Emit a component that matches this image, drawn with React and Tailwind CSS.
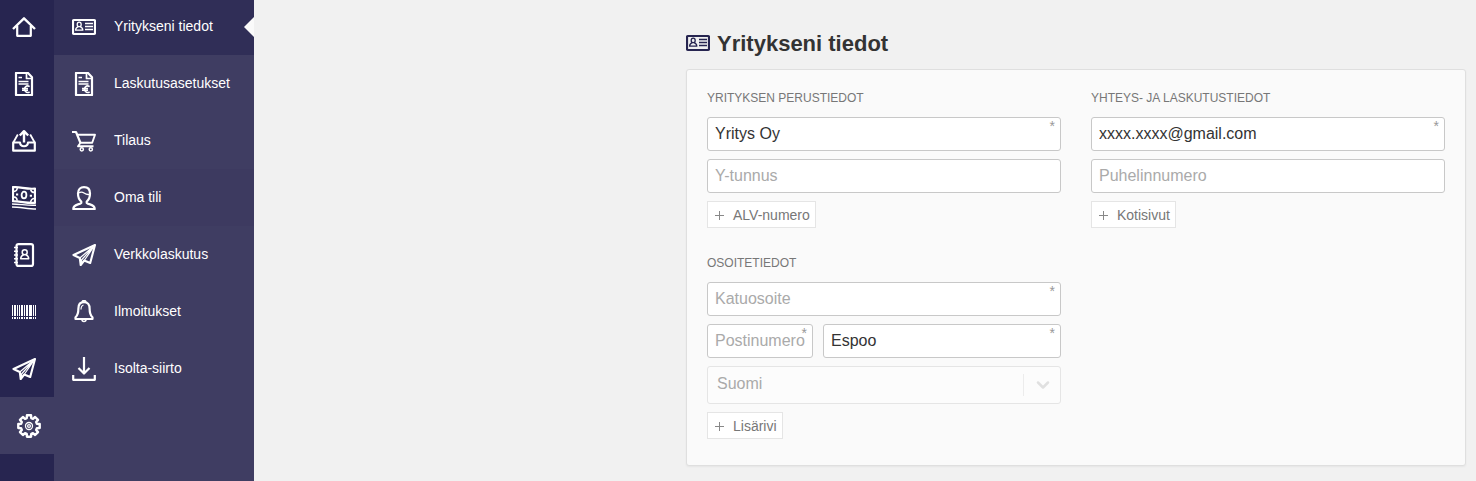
import { ChevronDown } from "lucide-react";

function Icon({ children, className = "w-6 h-6" }) {
  return (
    <svg
      viewBox="0 0 24 24"
      className={className}
      fill="none"
      stroke="currentColor"
      strokeWidth="2.2"
      strokeLinejoin="round"
      aria-hidden="true"
    >
      {children}
    </svg>
  );
}

const HomeIcon = () => (
  <Icon>
    <path d="M1 14 12 3.3 23 14" strokeWidth="2.4" />
    <path d="M5.2 11V20.800h13.600V11" />
  </Icon>
);

const CardIcon = ({ className }) => (
  <Icon className={className}>
    <rect x="1" y="5" width="22" height="14" rx="1" />
    <g strokeWidth="1.3">
      <ellipse cx="7.2" cy="9.4" rx="2" ry="2.3" />
      <path d="M6.2 11.6c-1.800.7-2.600 1.300-2.600 3.600h7.200c0-2.300-.8-2.900-2.600-3.600" />
      <path d="M13 8.500H21M13 11.500H21M13 14.500H21" />
    </g>
  </Icon>
);

const InvoiceIcon = () => (
  <Icon>
    <path d="M4 1h12l4 4.200V23H4Z" />
    <path d="M14.500 1.500v5H20" strokeWidth="1.700" />
    <path d="M6.500 5.500H10M6.500 9.500H16.500M6.500 12H16.500" strokeWidth="1.300" />
    <path d="M17.600 14.600a3.200 3.200 0 1 0 0 5.200M10 16.500h6M10 18.300h6" strokeWidth="1.600" />
  </Icon>
);

const OutboxIcon = () => (
  <Icon>
    <path d="M1.200 13.500H8c.4 5 7.600 5 8 0h6.800v8.200H1.200Z" />
    <path d="M1.300 13.500 5.800 5.500M22.700 13.500 18.200 5.500" strokeWidth="1.800" />
    <path d="M12 13.500V2.500M7.800 6.500 12 2.200l4.200 4.300" strokeWidth="2.400" />
  </Icon>
);

const CashIcon = () => (
  <Icon>
    <path d="M1 1c8 0 14 2.500 22 1.600v14.200C15 17.600 9 15.200 1 15.200Z" />
    <ellipse cx="12" cy="9" rx="2.400" ry="3.300" strokeWidth="1.800" />
    <path d="M2 5.500q3-.3 3.300-3.500M18.600 3.500q.6 3 4 3M2 11q3 .2 3.200 3.500M22 12.500q-3 .4-3.400 4" strokeWidth="1.500" />
    <path d="M4 8.500h2.200M17.800 9.800H20" strokeWidth="1.900" />
    <path d="M0 18c8 0 16 1.800 24 1.200M0 21c8 0 16 2 24 2" strokeWidth="1.400" />
  </Icon>
);

const ContactsIcon = () => (
  <Icon>
    <rect x="4.500" y="1.100" width="16.500" height="21.800" rx="2" />
    <path d="M2 4.500h4M2 8.200h4M2 12h4M2 15.800h4M2 19.500h4" strokeWidth="1.400" />
    <g strokeWidth="1.500">
      <circle cx="12.700" cy="9.300" r="2.500" />
      <path d="M11.600 11.800c-1.900.8-2.900 1.400-2.900 4h8c0-2.600-1-3.200-2.900-4" />
    </g>
  </Icon>
);

const BARS = [
  [0, 1], [2, 2], [5, 1], [7, 1], [9, 2], [12, 1], [14, 2], [17, 3], [21, 1], [23, 1],
];

const BarcodeIcon = () => (
  <Icon>
    <g fill="currentColor" stroke="none" shapeRendering="crispEdges">
      {BARS.map(([x, w]) => (
        <rect key={x} x={x} y="5" width={w} height="11" />
      ))}
      {BARS.map(([x, w]) => (
        <rect key={x} x={x} y="17" width={w} height="2" />
      ))}
    </g>
  </Icon>
);

const PlaneIcon = () => (
  <Icon>
    <path d="M23 2 1.500 12l6.300 3 .9 7 3.500-4.500L18.200 20Z" strokeWidth="2.100" />
    <path d="M23 2 7.800 15M23 2 9.500 17v4M23 2 12.200 17.500" strokeWidth="1.200" />
  </Icon>
);

const CartIcon = () => (
  <Icon>
    <path d="M0 3h4l4.500 11" />
    <path d="M5.500 5.800H23L20.200 13.800H8.500L6 17.200h15.500" strokeWidth="1.900" />
    <circle cx="9.800" cy="20.300" r="1.600" strokeWidth="1.500" />
    <circle cx="18.800" cy="20.300" r="1.600" strokeWidth="1.500" />
  </Icon>
);

const UserIcon = () => (
  <Icon>
    <path d="M9.300 15.500C6.800 13.500 6 10.500 6 7.500 6 3.200 8.500 1.200 12 1.200s6 2 6 6.300c0 3-.8 6-3.300 8v1.300c2.500 2.200 8 1.200 8 6.200H1.300c0-5 5.500-4 8-6.200Z" />
    <path d="M6.500 7C9 5.500 10.500 6 12 7s4 1.800 5.500 1.300" strokeWidth="1.400" />
  </Icon>
);

const BellIcon = () => (
  <Icon>
    <path d="M12 2.200c-3.800 0-5.600 2.800-5.600 6.300 0 5-.8 7-2.900 8.800V19h17v-1.700c-2.100-1.800-2.900-3.800-2.900-8.800 0-3.500-1.800-6.300-5.600-6.300Z" />
    <path d="M10.300 2.200a1.700 1.700 0 0 1 3.400 0M10 19.500a2 2 0 0 0 4 0" strokeWidth="1.600" />
    <path d="M9 9.500c0-2.200.8-4 2.500-4.500" strokeWidth="1.200" />
  </Icon>
);

const DownloadIcon = () => (
  <Icon>
    <path d="M12 0v16M6.500 11l5.500 5.500 5.500-5.500" />
    <path d="M1.200 18v4.800h21.600V18" />
  </Icon>
);

// eight teeth, four corner points each
const gearPoints = Array.from({ length: 8 }, (_, i) => {
  const mid = (i * Math.PI) / 4;
  return [[8.2, -0.28], [10.9, -0.19], [10.9, 0.19], [8.2, 0.28]]
    .map(([r, a]) => `${12 + r * Math.cos(mid + a)},${12 + r * Math.sin(mid + a)}`)
    .join(" ");
}).join(" ");

const GearIcon = () => (
  <Icon>
    <polygon points={gearPoints} strokeWidth="2.400" />
    <circle cx="12" cy="12" r="3.500" strokeWidth="1.300" />
    <circle cx="12" cy="12" r="1.400" strokeWidth="1.300" />
  </Icon>
);

const railItems = [
  { label: "Etusivu", icon: HomeIcon },
  { label: "Laskut", icon: InvoiceIcon },
  { label: "Lähetetyt", icon: OutboxIcon },
  { label: "Maksut", icon: CashIcon },
  { label: "Asiakkaat", icon: ContactsIcon },
  { label: "Tuotteet", icon: BarcodeIcon },
  { label: "Lähetys", icon: PlaneIcon },
  { label: "Asetukset", icon: GearIcon, active: true },
];

const menuItems = [
  { label: "Yritykseni tiedot", icon: CardIcon, bg: "bg-[#302e57]", active: true },
  { label: "Laskutusasetukset", icon: InvoiceIcon },
  { label: "Tilaus", icon: CartIcon },
  { label: "Oma tili", icon: UserIcon, bg: "bg-[#3d3a60]" },
  { label: "Verkkolaskutus", icon: PlaneIcon },
  { label: "Ilmoitukset", icon: BellIcon },
  { label: "Isolta-siirto", icon: DownloadIcon },
];

function Rail() {
  return (
    <nav className="w-[54px] shrink-0 bg-[#272550]">
      <div className="-mt-0.5">
        {railItems.map(({ label, icon: ItemIcon, active }) => (
          <a
            key={label}
            href="#"
            aria-label={label}
            className={`flex h-[57px] items-center ${active ? "bg-[#3f3d62] pl-[17px]" : "pl-3"}`}
          >
            <ItemIcon />
          </a>
        ))}
      </div>
    </nav>
  );
}

function SideMenu() {
  return (
    <nav className="w-[200px] shrink-0 bg-[#3f3d62]">
      <div className="-mt-0.5">
        {menuItems.map(({ label, icon: ItemIcon, bg = "", active }) => (
          <a key={label} href="#" className={`relative flex h-[57px] items-center pl-[18px] text-sm ${bg}`}>
            <ItemIcon />
            <span className="ml-[18px] pb-0.5">{label}</span>
            {active && (
              <svg viewBox="0 0 10 20" className="absolute right-0 h-5 w-2.5" fill="#fafafa" aria-hidden="true">
                <path d="M10 0v20L0 10Z" />
              </svg>
            )}
          </a>
        ))}
      </div>
    </nav>
  );
}

function Field({ label, value, type = "text", required, className = "" }) {
  return (
    <div className={`relative ${className}`}>
      <input
        type={type}
        aria-label={label}
        placeholder={label}
        defaultValue={value}
        required={required}
        className="block h-[34px] w-full rounded-[3px] border border-[#c8c8c8] bg-white px-[7px] text-base text-[#333] shadow-none outline-none placeholder:text-[#aaa]"
      />
      {required && <span className="absolute top-px right-[6px] text-sm leading-4 text-[#999]">*</span>}
    </div>
  );
}

function AddButton({ children }) {
  return (
    <button
      type="button"
      className="flex h-[27px] items-center gap-2 self-start border border-[#e5e5e5] bg-white pr-[5px] pl-[6px] text-sm text-[#777]"
    >
      <svg viewBox="0 0 11 11" className="mt-0.5 h-[11px] w-[11px]" stroke="#888" aria-hidden="true">
        <path d="M5.500 1v9M1 5.500h9" />
      </svg>
      {children}
    </button>
  );
}

function Section({ title, children }) {
  return (
    <section className="flex flex-col gap-2">
      <h2 className="mb-[3px] text-xs leading-4 text-[#777] uppercase">{title}</h2>
      {children}
    </section>
  );
}

export default function App() {
  return (
    <div className="flex min-h-screen bg-[#f1f1f1] font-['Liberation_Sans',Arial,sans-serif] text-white">
      <Rail />
      <SideMenu />

      <main className="flex flex-1 justify-end pt-[27px] pr-[10px] pb-[15px]">
        <div className="w-full max-w-[780px]">
          <h1 className="flex h-8 items-center gap-[7px] text-[22px] font-bold text-[#333]">
            <span className="text-[#272550]">
              <CardIcon />
            </span>
            Yritykseni tiedot
          </h1>

          <form className="mt-[10px] grid grid-cols-2 gap-x-[30px] rounded-[3px] border border-[#dfdfdf] bg-[#fafafa] px-5 pt-5 pb-[26px] shadow-xs">
            <div className="flex flex-col gap-[27px]">
              <Section title="Yrityksen perustiedot">
                <Field label="Yrityksen nimi" value="Yritys Oy" required />
                <Field label="Y-tunnus" />
                <AddButton>ALV-numero</AddButton>
              </Section>

              <Section title="Osoitetiedot">
                <Field label="Katuosoite" required />
                <div className="flex gap-[10px]">
                  <Field label="Postinumero" required className="w-[106px]" />
                  <Field label="Postitoimipaikka" value="Espoo" required className="flex-1" />
                </div>
                <div className="relative">
                  <select
                    disabled
                    aria-label="Maa"
                    className="block h-[38px] w-full appearance-none rounded-[3px] border border-[#e5e5e5] bg-[#fcfcfc] px-[9px] pb-[2px] text-base text-[#aaa] opacity-100"
                  >
                    <option>Suomi</option>
                  </select>
                  <span className="pointer-events-none absolute inset-y-2 right-0 flex w-[38px] items-center justify-center border-l border-[#ececec] text-[#e0e0e0]">
                    <ChevronDown className="h-5 w-5" strokeWidth={3} />
                  </span>
                </div>
                <AddButton>Lisärivi</AddButton>
              </Section>
            </div>

            <div>
              <Section title="Yhteys- ja laskutustiedot">
                <Field label="Sähköposti" type="email" value="xxxx.xxxx@gmail.com" required />
                <Field label="Puhelinnumero" type="tel" />
                <AddButton>Kotisivut</AddButton>
              </Section>
            </div>
          </form>
        </div>
      </main>
    </div>
  );
}
